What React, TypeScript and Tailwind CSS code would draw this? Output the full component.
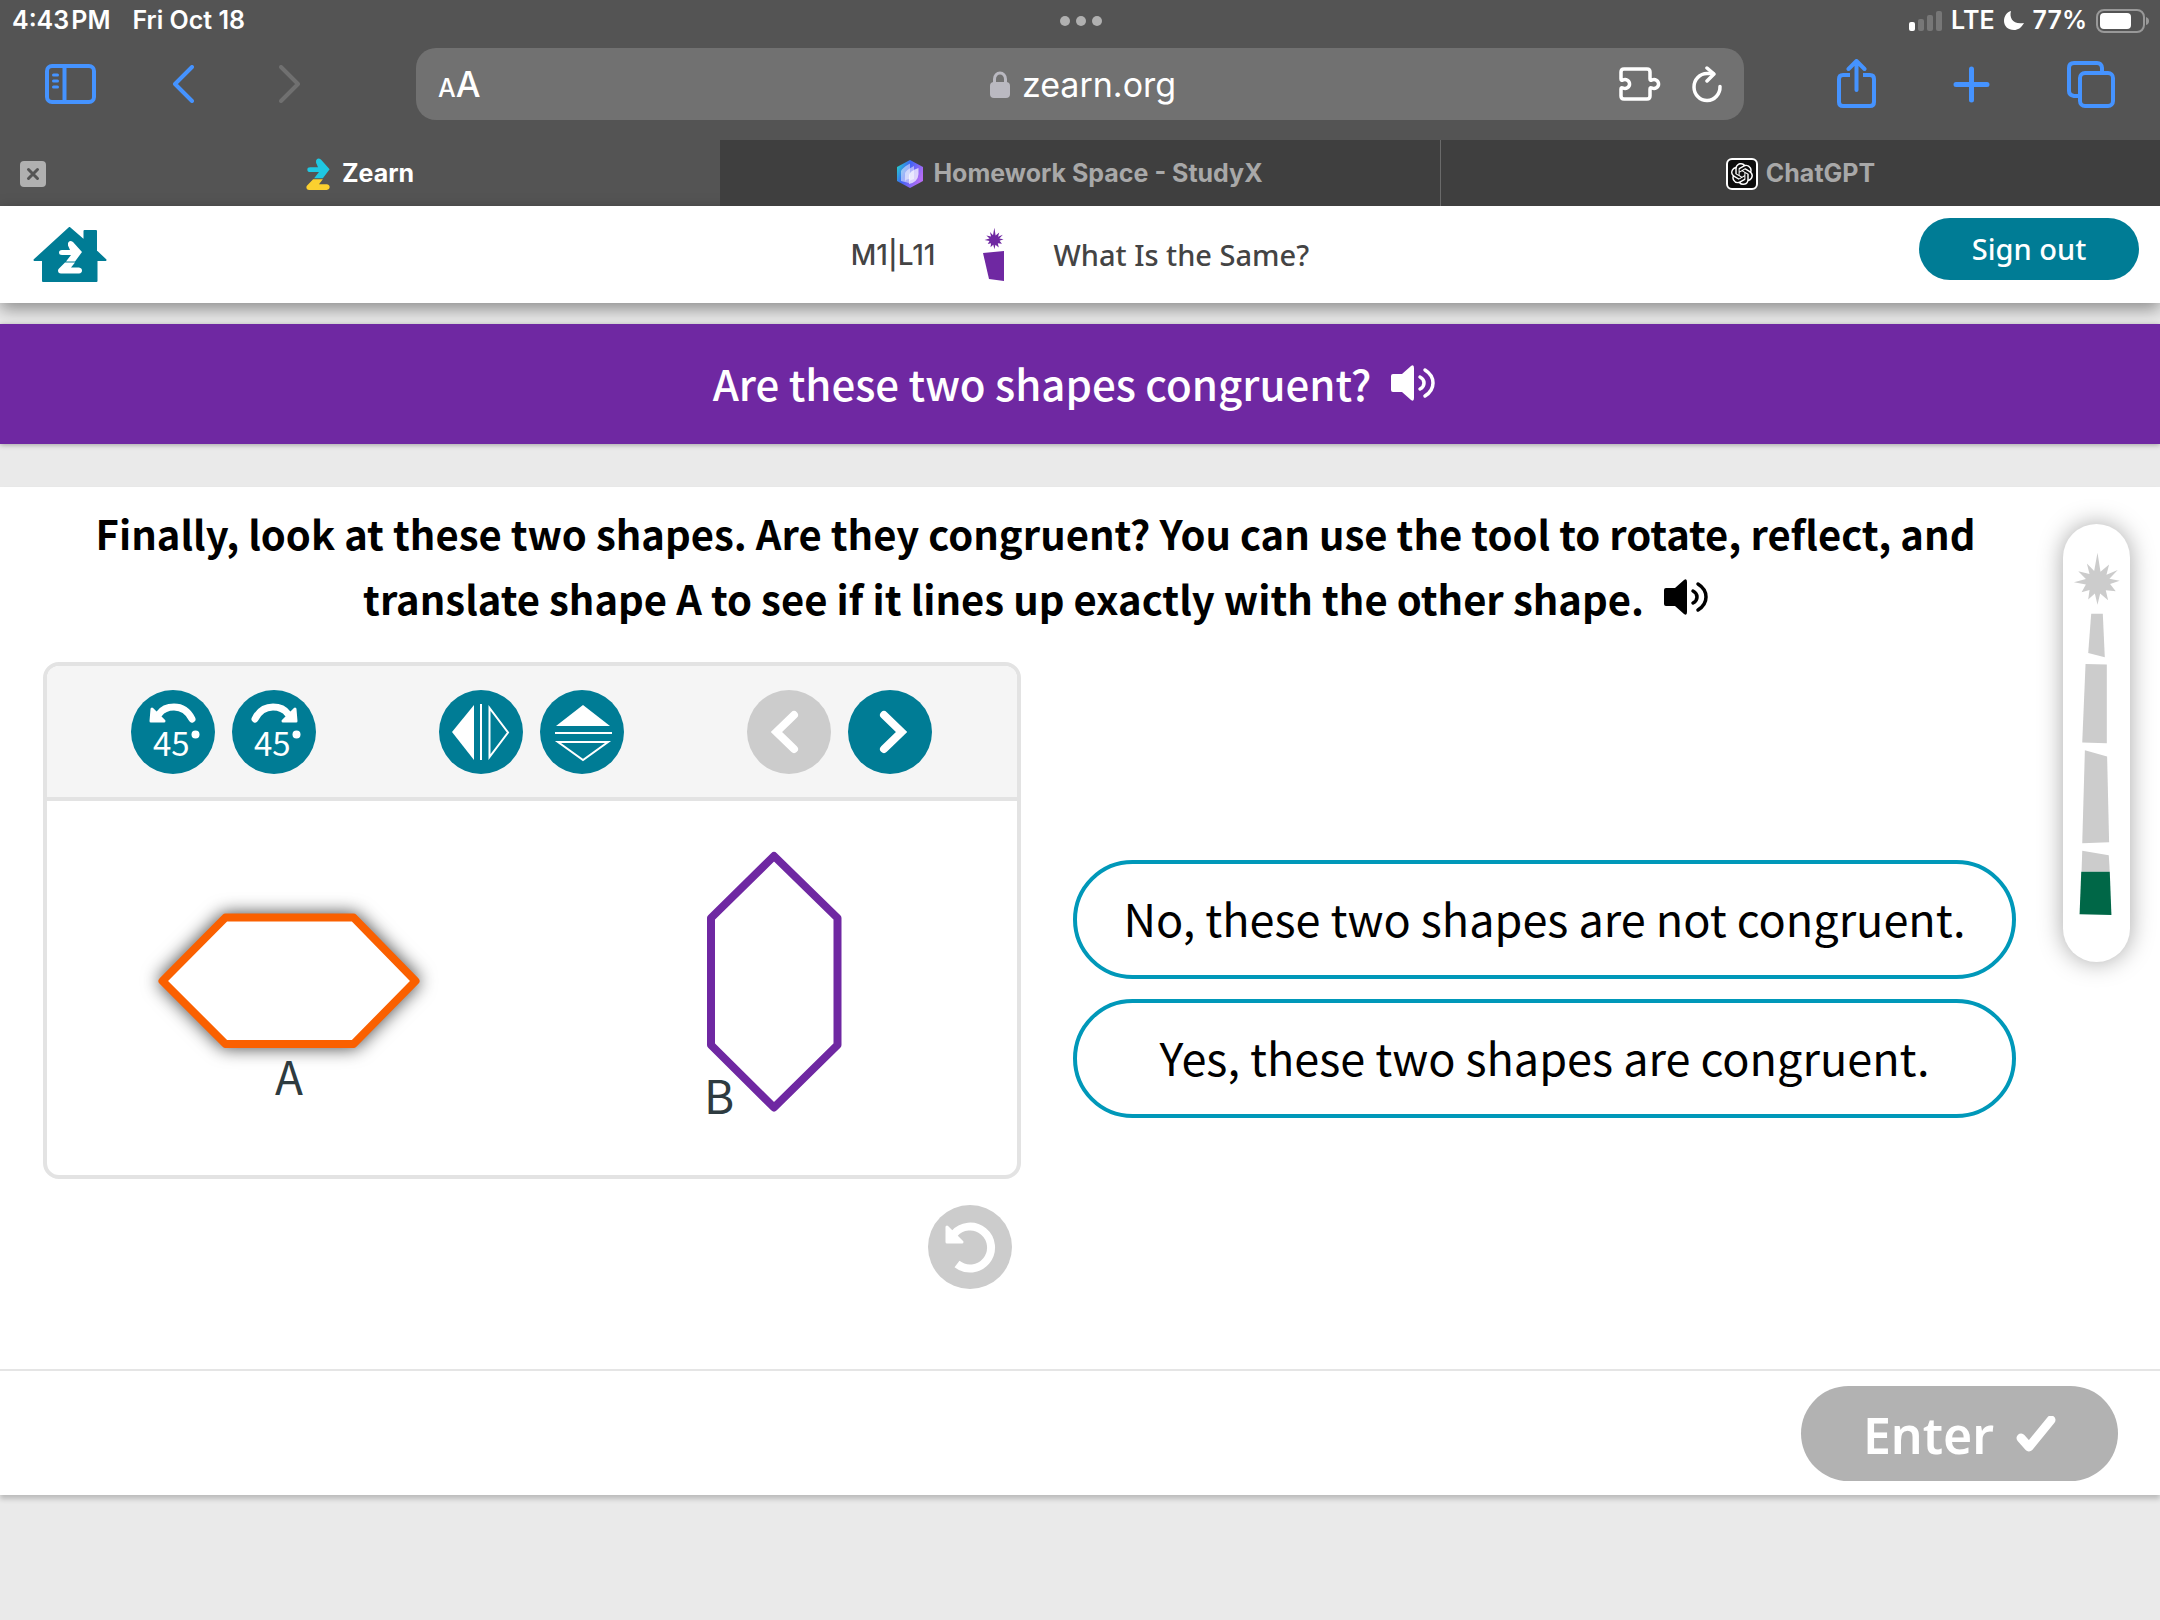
import type { ReactNode } from "react";
import { SiOpenai } from "react-icons/si";

const STAR_POINTS =
  "352,215 361,272 387,250 379,281 413,267 388,293 419,299 390,309 407,331 377,328 384,358 360,338 352,372 344,338 324,356 328,327 304,334 317,311 281,304 317,294 294,271 328,279 320,247 342,270";

const ANSWERS = ["No, these two shapes are not congruent.", "Yes, these two shapes are congruent."];

function ZMark({ top, bottom, className }: { top: string; bottom: string; className: string }) {
  return (
    <svg viewBox="0 0 24 33" className={className} aria-hidden="true">
      <path fill={top} d="M10 2.5Q11.500 -1 15 1.500L24 11.500 17 21H8L13 14.500H4Q1 14.500 1 12T4 9.500H12L10 5Z" />
      <path fill={bottom} d="M7 22H17L13 27H21Q24 27.500 24 30T21 33H3Q0 33 0 30 0 29 1 28Z" />
    </svg>
  );
}

function StatusBar() {
  return (
    <div className="flex h-10 items-center justify-between pl-3 pr-[10px] pt-px text-[25px] font-semibold">
      <div className="flex flex-1 gap-[22px]">
        <span>4:43{"\u200A"}PM</span>
        <span>Fri Oct 18</span>
      </div>
      <div className="flex gap-[6px]">
        <span className="h-[10px] w-[10px] rounded-full bg-[#b0b0b0]" />
        <span className="h-[10px] w-[10px] rounded-full bg-[#b0b0b0]" />
        <span className="h-[10px] w-[10px] rounded-full bg-[#b0b0b0]" />
      </div>
      <div className="flex flex-1 items-center justify-end gap-[9px]">
        <svg viewBox="0 0 33 20" className="h-5 w-[33px]" aria-hidden="true">
          <rect x="0" y="11" width="6" height="9" rx="2" fill="#fff" />
          <rect x="9" y="8" width="6" height="12" rx="2" fill="#777" />
          <rect x="18" y="4" width="6" height="16" rx="2" fill="#777" />
          <rect x="27" y="0" width="6" height="20" rx="2" fill="#777" />
        </svg>
        <span>LTE</span>
        <svg viewBox="0 0 20 19" className="h-[19px] w-5" aria-hidden="true">
          <path fill="#fff" d="M7 0C5 7 9 14 20 12C17 17 14 19 10 19C4 19 0 15 0 10C0 5 3 1 7 0Z" />
        </svg>
        <span>77%</span>
        <svg viewBox="0 0 54 24" className="h-6 w-[54px]" aria-hidden="true">
          <rect x="1" y="1" width="47" height="22" rx="7" fill="none" stroke="#999" strokeWidth="2" />
          <rect x="4" y="4" width="31" height="16" rx="4" fill="#fff" />
          <path fill="#999" d="M50 8Q53 9 53 12T50 16Z" />
        </svg>
      </div>
    </div>
  );
}

function Toolbar() {
  return (
    <div className="flex h-[100px] items-start pl-[45px] pr-[45px] pt-2">
      <div className="flex h-[72px] w-[371px] shrink-0 items-center text-[#4593ff]">
        <button type="button" aria-label="Show sidebar">
          <svg viewBox="0 0 51 40" className="h-10 w-[51px]" fill="none" stroke="currentColor">
            <rect x="2" y="2" width="47" height="36" rx="5" strokeWidth="4" />
            <path strokeWidth="4" d="M19.500 2V38" />
            <path strokeWidth="3" strokeLinecap="round" d="M8.500 11H12.500M8.500 17H12.500M8.500 23H12.500" />
          </svg>
        </button>
        <button type="button" aria-label="Back" className="ml-[76px]">
          <svg viewBox="0 0 22 38" className="h-[38px] w-[22px]" fill="none" stroke="currentColor" strokeWidth="4" strokeLinecap="round" strokeLinejoin="round">
            <path d="M20 2L3 19L20 36" />
          </svg>
        </button>
        <button type="button" aria-label="Forward" disabled className="ml-[85px] text-[#707070]">
          <svg viewBox="0 0 22 38" className="h-[38px] w-[22px]" fill="none" stroke="currentColor" strokeWidth="4" strokeLinecap="round" strokeLinejoin="round">
            <path d="M2 2L19 19L2 36" />
          </svg>
        </button>
      </div>
      <div className="flex h-[72px] flex-1 items-center rounded-[20px] bg-[#717171] px-[22px]">
        <button type="button" aria-label="Page settings" className="flex flex-1 items-baseline font-medium">
          <span className="text-[25px]">A</span>
          <span className="text-[35px]">A</span>
        </button>
        <div className="flex items-center gap-3 pl-[6px] text-[34px]">
          <svg viewBox="0 0 20 27" className="h-[27px] w-5" aria-hidden="true">
            <rect y="11" width="20" height="16" rx="4" fill="#bab9c1" />
            <path d="M4.500 12V8a5.500 6 0 0 1 11 0V12" fill="none" stroke="#bab9c1" strokeWidth="3" />
          </svg>
          <span>zearn.org</span>
        </div>
        <div className="flex flex-1 items-center justify-end gap-[31px]">
          <button type="button" aria-label="Extensions">
            <svg viewBox="0 0 42 34" className="h-[34px] w-[42px]" fill="none" stroke="#fff" strokeWidth="3.500" strokeLinejoin="round">
              <path d="M5 2H28Q31 2 31 5V12Q31 14 33 13A4.500 4.500 0 1 1 33 21Q31 20 31 22V29Q31 32 28 32H5Q2 32 2 29V22Q2 20 4 21A4.500 4.500 0 1 0 4 13Q2 14 2 12V5Q2 2 5 2Z" />
            </svg>
          </button>
          <button type="button" aria-label="Reload">
            <svg viewBox="0 0 30 37" className="h-[37px] w-[30px]" fill="none" stroke="#fff" strokeWidth="3.500" strokeLinecap="round" strokeLinejoin="round">
              <path d="M28 20.500A13 13.500 0 1 1 15 7.500H21" />
              <path d="M15 2L22 8L15 15" />
            </svg>
          </button>
        </div>
      </div>
      <div className="flex h-[72px] w-[371px] shrink-0 items-center justify-end text-[#4593ff]">
        <button type="button" aria-label="Share">
          <svg viewBox="0 0 39 50" className="h-[50px] w-[39px]" fill="none" stroke="currentColor" strokeWidth="4" strokeLinecap="round" strokeLinejoin="round">
            <path strokeLinecap="butt" d="M13 16H6Q2 16 2 20V43Q2 47 6 47H33Q37 47 37 43V20Q37 16 33 16H26" />
            <path d="M19.500 31V3M11.500 10L19.500 2L27.500 10" />
          </svg>
        </button>
        <button type="button" aria-label="New tab" className="ml-[77px]">
          <svg viewBox="0 0 37 37" className="h-[37px] w-[37px]" fill="none" stroke="currentColor" strokeWidth="5" strokeLinecap="round">
            <path d="M18.500 3V34M3 18.500H34" />
          </svg>
        </button>
        <button type="button" aria-label="Show tabs" className="ml-[77px]">
          <svg viewBox="0 0 48 47" className="h-[47px] w-12" fill="none" stroke="currentColor" strokeWidth="4">
            <rect x="13" y="12" width="33" height="33" rx="5" />
            <path d="M11 35H7Q2 34 2 30V7Q2 2 7 2H30Q34.500 2 35 7V10" />
          </svg>
        </button>
      </div>
    </div>
  );
}

function BrowserTabs() {
  return (
    <div className="grid h-[66px] grid-cols-3 text-[25px] font-bold">
      <div className="grid grid-cols-[1fr_auto_1fr] items-center px-5 pt-[2px]">
        <button type="button" aria-label="Close tab">
          <svg viewBox="0 0 26 26" className="h-[26px] w-[26px]">
            <rect width="26" height="26" rx="4" fill="#b0b0b0" />
            <path d="M8.500 8.500L17.500 17.500M17.500 8.500L8.500 17.500" stroke="#545454" strokeWidth="3" strokeLinecap="round" />
          </svg>
        </button>
        <div className="flex items-center gap-3">
          <ZMark top="#1fc8e3" bottom="#fbd02f" className="h-8 w-6" />
          <span>Zearn</span>
        </div>
      </div>
      <div className="flex items-center justify-center gap-[10px] bg-[#3f3f3f] pt-[2px] text-[#a8a8a8]">
        <svg viewBox="0 0 26 28" className="h-7 w-[26px]" aria-hidden="true">
          <defs>
            <linearGradient id="gem" x1="0" y1="0" x2="1" y2="0.500">
              <stop offset="0" stopColor="#1ee8c4" />
              <stop offset="0.450" stopColor="#3f63f5" />
              <stop offset="1" stopColor="#b46cf5" />
            </linearGradient>
          </defs>
          <path fill="url(#gem)" d="M13 0L26 7V21L13 28L0 21V7Z" />
          <path fill="#fff" opacity="0.500" d="M4 21V11Q5 8 13 3.500V19Q8 19 8 22Z" />
          <path fill="#fff" opacity="0.500" d="M8 22V13Q9 10 17 6V19Q12 20 12 23Z" />
          <path fill="#fff" opacity="0.700" d="M12 24V15Q13 11 21.500 8V14Q21 22 12 24Z" />
        </svg>
        <span>Homework Space - StudyX</span>
      </div>
      <div className="flex items-center justify-center gap-2 border-l border-[#6a6a6a] bg-[#3f3f3f] pt-[2px] text-[#a8a8a8]">
        <span className="flex h-8 w-8 items-center justify-center rounded-md border-2 border-white bg-[#0d0d0d] text-white">
          <SiOpenai className="h-[22px] w-[22px]" />
        </span>
        <span>ChatGPT</span>
      </div>
    </div>
  );
}

function LessonHeader() {
  return (
    <header className="grid h-[97px] grid-cols-[1fr_auto_1fr] items-center bg-white font-['Noto_Sans',sans-serif] text-[29px] font-medium text-[#444] shadow-[0_6px_16px_rgba(0,0,0,0.4)]">
      <a href="#home" aria-label="Home" className="ml-[33px] justify-self-start">
        <svg viewBox="33 227 74 56" className="h-14 w-[74px]">
          <path
            fill="#007c95"
            stroke="#007c95"
            strokeWidth="2"
            strokeLinejoin="round"
            d="M69.500 228L84.500 241V231H96V251L105.500 260H96.500V281H43V260H34.500Z"
          />
          <svg x="58" y="240" width="24" height="34" viewBox="0 0 24 33">
            <path fill="#fff" d="M10 2.500Q11.500 -1 15 1.500L24 11.500 17 21H8L13 14.500H4Q1 14.500 1 12T4 9.500H12L10 5Z" />
            <path fill="#fff" d="M7 22H17L13 27H21Q24 27.500 24 30T21 33H3Q0 33 0 30 0 29 1 28Z" />
          </svg>
        </svg>
      </a>
      <div className="flex items-center gap-12">
        <span className="font-[Inter,sans-serif] text-[28px]">M1|L11</span>
        <svg viewBox="980 227 22 54" className="h-[54px] w-[22px]" aria-hidden="true">
          <g fill="#6f28a2">
            <polygon points={STAR_POINTS} transform="translate(942.800 197) scale(0.138)" />
            <polygon points="980,252 1001,250 1001,280 986,278" />
          </g>
        </svg>
        <span>What Is the Same?</span>
      </div>
      <button
        type="button"
        className="mr-[21px] mt-3 h-[62px] w-[220px] self-start justify-self-end rounded-full bg-[#007c95] text-white"
      >
        Sign out
      </button>
    </header>
  );
}

function SpeakerButton({ className }: { className?: string }) {
  return (
    <button type="button" aria-label="Read aloud" className={className}>
      <svg viewBox="0 0 44 36" className="h-9 w-11" fill="currentColor">
        <path d="M2 9H11L20 1Q23 -1 23 3V33Q23 37 20 35L11 27H2Q0 27 0 25V11Q0 9 2 9Z" />
        <path d="M29 12Q33 14 33 18T29 24M34 5Q42 10 42 18T34 31" fill="none" stroke="currentColor" strokeWidth="3.500" strokeLinecap="round" />
      </svg>
    </button>
  );
}

function RoundButton({ label, disabled = false, children }: { label: string; disabled?: boolean; children: ReactNode }) {
  return (
    <button
      type="button"
      aria-label={label}
      disabled={disabled}
      className="h-[84px] w-[84px] rounded-full bg-[#007c95] text-white disabled:bg-[#ccc]"
    >
      <svg viewBox="0 0 84 84" className="h-full w-full" fill="none" stroke="currentColor">
        {children}
      </svg>
    </button>
  );
}

function DegreeLabel() {
  return (
    <>
      <text x="22" y="66" fontSize="33" fill="currentColor" stroke="none">
        45
      </text>
      <circle cx="64.500" cy="44.500" r="4" fill="currentColor" stroke="none" />
    </>
  );
}

function ShapeTool() {
  return (
    <section className="overflow-hidden rounded-2xl border-4 border-[#e3e3e3] bg-white">
      <div className="flex h-[135px] items-center justify-between border-b-4 border-[#e3e3e3] bg-[#f5f5f5] pl-[84px] pr-[85px]">
        <div className="flex gap-[17px]">
          <RoundButton label="Rotate 45° counterclockwise">
            <path d="M61 29Q55 17 43 17Q33 17 28 24" strokeWidth="7" strokeLinecap="round" />
            <path d="M21 19L20 31H33Z" fill="currentColor" strokeWidth="3" strokeLinejoin="round" />
            <DegreeLabel />
          </RoundButton>
          <RoundButton label="Rotate 45° clockwise">
            <path d="M23 29Q29 17 41 17Q51 17 56 24" strokeWidth="7" strokeLinecap="round" />
            <path d="M63 19L64 31H51Z" fill="currentColor" strokeWidth="3" strokeLinejoin="round" />
            <DegreeLabel />
          </RoundButton>
        </div>
        <div className="flex gap-[17px]">
          <RoundButton label="Reflect horizontally">
            <path d="M13 42L35 15V70Z" fill="currentColor" stroke="none" />
            <path d="M42 14V70M50.500 18V67L69 42.500Z" strokeWidth="2" />
          </RoundButton>
          <RoundButton label="Reflect vertically">
            <path d="M43 15L70 36H16Z" fill="currentColor" stroke="none" />
            <path d="M15 43H72M18 52H68L43 70Z" strokeWidth="2" />
          </RoundButton>
        </div>
        <div className="flex gap-[17px]">
          <RoundButton label="Previous shape" disabled>
            <path d="M47 25L29.500 42L47 59" strokeWidth="8" strokeLinecap="round" />
          </RoundButton>
          <RoundButton label="Next shape">
            <path d="M36 25L53.500 42L36 59" strokeWidth="8" strokeLinecap="round" />
          </RoundButton>
        </div>
      </div>
      <svg viewBox="47 801 970 374" className="w-full" fontSize="46" fill="#2e3b40">
        <polygon
          points="162.500,981 225.500,917.500 353.500,917.500 415.500,981 353.500,1044 225.500,1044"
          fill="#fff"
          stroke="#fa6000"
          strokeWidth="8"
          strokeLinejoin="round"
          className="drop-shadow-[0_0_9px_rgba(0,0,0,0.75)]"
        />
        <polygon
          points="774,856 837.500,918 837.500,1045 774,1107.500 711,1045 711,918"
          fill="#fff"
          stroke="#6f28a2"
          strokeWidth="8"
          strokeLinejoin="round"
        />
        <text x="289" y="1095" textAnchor="middle">
          A
        </text>
        <text x="704" y="1114">B</text>
      </svg>
    </section>
  );
}

function ProgressTower() {
  return (
    <aside className="h-[438px] w-[67px] shrink-0 rounded-full bg-white shadow-[0_0_24px_rgba(0,0,0,0.35)]">
      <svg viewBox="248 131 202 1315" className="h-full w-full" fill="#ccc" aria-label="Lesson progress">
        <polygon points={STAR_POINTS} />
        <polygon points="333,399 368,399 374,530 324,517" />
        <polygon points="316,550 380,552 380,789 306,787" />
        <polygon points="314,810 381,829 387,1088 306,1091" />
        <polygon points="306,1113 386,1127 389,1177 304,1177" />
        <polygon points="303,1177 389,1177 394,1307 298,1305" fill="#006747" />
      </svg>
    </aside>
  );
}

export default function App() {
  return (
    <div className="min-h-screen bg-[#eaeaea] font-['Noto_Sans_CJK_SC',sans-serif] text-black">
      <div className="bg-[#545454] font-[Inter,sans-serif] text-white">
        <StatusBar />
        <Toolbar />
        <BrowserTabs />
      </div>
      <LessonHeader />

      <div className="mt-[21px] flex h-[120px] items-center justify-center gap-5 bg-[#6f28a2] pb-[3px] pr-3 text-white shadow-[0_1px_5px_rgba(0,0,0,0.3)]">
        <h1 className="text-[42px] font-medium">Are these two shapes congruent?</h1>
        <SpeakerButton />
      </div>

      <main className="mt-[43px] bg-white shadow-[0_4px_5px_rgba(0,0,0,0.2)]">
        <div className="flex items-start gap-[47px] pb-20 pl-[43px] pr-[30px] pt-[14px]">
          <div className="flex-1">
            <p className="pl-3 text-center text-[40px] font-bold leading-[65px]">
              Finally, look at these two shapes. Are they congruent? You can use the tool to rotate, reflect, and translate
              shape A to see if it lines up exactly with the other shape.
              <SpeakerButton className="ml-5 align-baseline" />
            </p>
            <div className="mt-[31px] grid grid-cols-[978fr_943fr] items-start gap-[52px]">
              <div>
                <ShapeTool />
                <div className="mt-[26px] flex justify-end pr-[9px]">
                  <RoundButton label="Undo" disabled>
                    <path d="M26 29A21 21 0 1 1 29 59" strokeWidth="8" />
                    <path d="M19 22V37H34Z" fill="currentColor" strokeWidth="3" strokeLinejoin="round" />
                  </RoundButton>
                </div>
              </div>
              <div className="grid gap-5 pt-[198px]">
                {ANSWERS.map((answer) => (
                  <button
                    key={answer}
                    type="button"
                    className="h-[119px] rounded-full border-4 border-[#0098b9] pb-1 text-[45px]"
                  >
                    {answer}
                  </button>
                ))}
              </div>
            </div>
          </div>
          <div className="pt-[23px]">
            <ProgressTower />
          </div>
        </div>
        <footer className="flex h-[126px] items-center justify-end border-t-2 border-[#e5e5e5] pr-[42px]">
          <button
            type="button"
            disabled
            className="flex h-[95px] w-[317px] items-center justify-center gap-[22px] rounded-full bg-[#b2b2b2] pt-1 font-['Noto_Sans',sans-serif] text-[50px] font-semibold text-white"
          >
            Enter
            <svg viewBox="0 0 40 38" className="h-[38px] w-10" fill="none" stroke="currentColor" strokeWidth="9" strokeLinecap="round" strokeLinejoin="round" aria-hidden="true">
              <path d="M5 22L13 31L35 4" />
            </svg>
          </button>
        </footer>
      </main>
    </div>
  );
}
